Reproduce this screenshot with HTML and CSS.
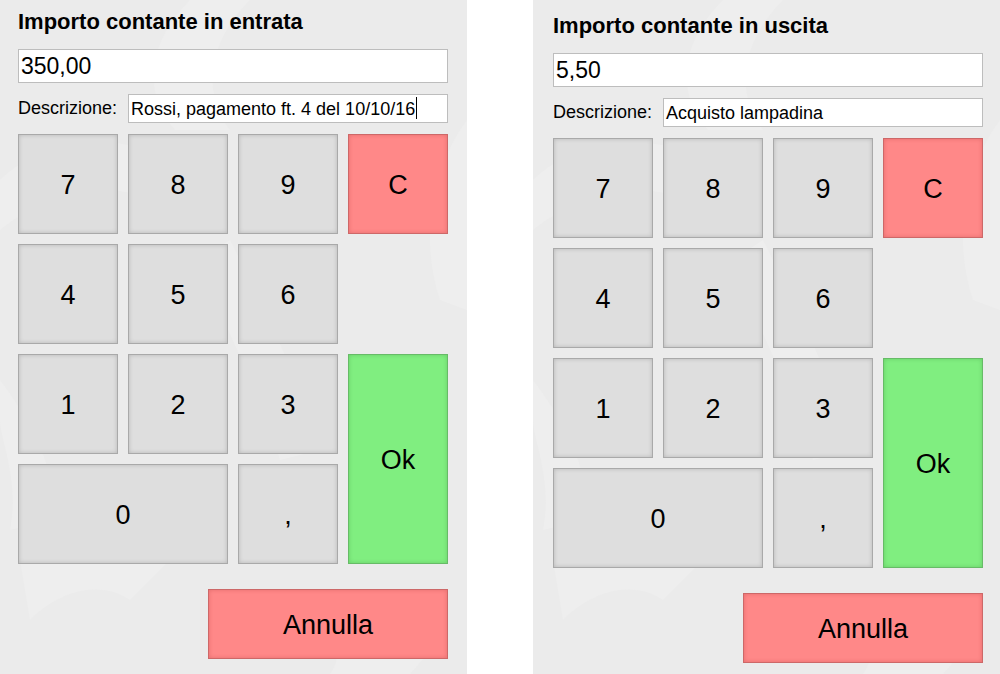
FILE: index.html
```html
<!DOCTYPE html>
<html lang="it">
<head>
<meta charset="utf-8">
<title>Importo contante</title>
<link rel="stylesheet" href="styles.css">
</head>
<body>
<div class="screen">
  <section class="panel panel-in">
    <h1 class="title">Importo contante in entrata</h1>
    <div class="amount">350,00</div>
    <div class="desc-row">
      <span class="desc-label">Descrizione:</span>
      <div class="desc-field">Rossi, pagamento ft. 4 del 10/10/16<span class="caret"></span></div>
    </div>
    <div class="keypad">
      <div class="key">7</div>
      <div class="key">8</div>
      <div class="key">9</div>
      <div class="key key-clear">C</div>
      <div class="key">4</div>
      <div class="key">5</div>
      <div class="key">6</div>
      <div class="key key-one">1</div>
      <div class="key">2</div>
      <div class="key">3</div>
      <div class="key key-ok">Ok</div>
      <div class="key key-zero">0</div>
      <div class="key key-comma">,</div>
    </div>
    <div class="footer"><div class="btn-cancel">Annulla</div></div>
  </section>
  <div class="divider"></div>
  <section class="panel panel-out">
    <h1 class="title">Importo contante in uscita</h1>
    <div class="amount">5,50</div>
    <div class="desc-row">
      <span class="desc-label">Descrizione:</span>
      <div class="desc-field">Acquisto lampadina</div>
    </div>
    <div class="keypad">
      <div class="key">7</div>
      <div class="key">8</div>
      <div class="key">9</div>
      <div class="key key-clear">C</div>
      <div class="key">4</div>
      <div class="key">5</div>
      <div class="key">6</div>
      <div class="key key-one">1</div>
      <div class="key">2</div>
      <div class="key">3</div>
      <div class="key key-ok">Ok</div>
      <div class="key key-zero">0</div>
      <div class="key key-comma">,</div>
    </div>
    <div class="footer"><div class="btn-cancel">Annulla</div></div>
  </section>
</div>
</body>
</html>
```

FILE: styles.css
```css
* { box-sizing: border-box; }
html, body { margin: 0; padding: 0; background: #ffffff; }
body {
  font-family: "Liberation Sans", Arial, sans-serif;
  color: #000;
  width: 1000px;
  height: 674px;
  overflow: hidden;
}
.screen {
  display: flex;
  width: 1000px;
  height: 674px;
}
.divider { width: 66px; background: #ffffff; }
.panel {
  width: 467px;
  height: 674px;
  background-color: #ebebeb;
  background-image: url("data:image/svg+xml;utf8,<svg xmlns='http://www.w3.org/2000/svg' width='467' height='674'><g fill='%23eeeeee'><path d='M190 0 C150 40 140 90 175 130 L230 130 C200 90 210 40 250 0 Z'/><path d='M0 180 C40 140 120 130 170 160 L150 200 C110 180 50 190 0 230 Z'/><path d='M230 240 C260 300 300 380 320 450 L280 460 C260 390 220 320 200 260 Z'/><path d='M0 380 C30 420 60 470 50 520 L10 530 C20 480 0 440 0 420 Z'/><path d='M20 560 C70 530 140 530 170 560 L130 600 C100 580 60 590 30 620 Z'/><path d='M467 120 C430 170 420 240 440 300 L467 310 Z'/><path d='M300 620 C340 600 400 600 440 640 L410 674 L330 674 C350 650 320 630 300 620 Z'/></g></svg>");
  background-repeat: no-repeat;
}
.panel-in { padding: 9px 19px 0 18px; }
.panel-out { padding: 13px 17px 0 20px; }

.title {
  margin: 0;
  font-size: 22px;
  line-height: 26px;
  font-weight: bold;
}
.amount {
  margin-top: 14px;
  height: 34px;
  background: #fff;
  border: 1px solid #bdbdbd;
  font-size: 23px;
  line-height: 33px;
  padding-left: 2px;
}
.desc-row {
  margin-top: 11px;
  display: flex;
  align-items: center;
  height: 29px;
}
.desc-label {
  width: 110px;
  font-size: 18px;
  line-height: 29px;
  flex-shrink: 0;
}
.desc-field {
  flex: 1;
  height: 29px;
  background: #fff;
  border: 1px solid #bdbdbd;
  font-size: 18px;
  line-height: 28px;
  padding-left: 2px;
  white-space: nowrap;
  overflow: hidden;
}
.caret {
  display: inline-block;
  width: 1px;
  height: 22px;
  background: #000;
  vertical-align: -4px;
  margin-left: 1px;
}
.keypad {
  margin-top: 11px;
  display: grid;
  grid-template-columns: repeat(4, 100px);
  grid-template-rows: repeat(4, 100px);
  gap: 10px;
}
.key {
  display: flex;
  align-items: center;
  justify-content: center;
  padding-top: 2px;
  background: #dedede;
  border: 1px solid #a9a9a9;
  box-shadow: inset 0 0 4px rgba(0, 0, 0, 0.18);
  font-size: 27px;
}
.key-clear {
  background: #ff8888;
  border-color: #cd6868;
  box-shadow: inset 0 0 4px rgba(120, 0, 0, 0.2);
}
.key-one { grid-column: 1; }
.key-ok {
  grid-column: 4;
  grid-row: 3 / span 2;
  background: #80ee80;
  border-color: #67bb67;
  box-shadow: inset 0 0 4px rgba(0, 80, 0, 0.2);
}
.key-zero { grid-column: 1 / span 2; }
.key-comma { grid-column: 3; }
.footer {
  margin-top: 25px;
  width: 430px;
  display: flex;
  justify-content: flex-end;
}
.btn-cancel {
  width: 240px;
  height: 70px;
  display: flex;
  align-items: center;
  justify-content: center;
  padding-top: 2px;
  background: #ff8888;
  border: 1px solid #cd6868;
  box-shadow: inset 0 0 4px rgba(120, 0, 0, 0.2);
  font-size: 27px;
}
```
